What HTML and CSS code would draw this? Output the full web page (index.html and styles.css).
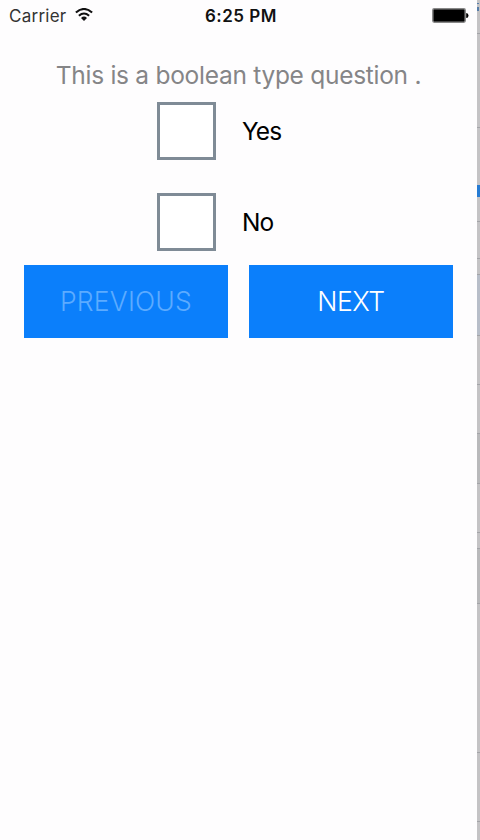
FILE: index.html
```html
<!DOCTYPE html>
<html lang="en">
<head>
<meta charset="utf-8">
<title>Survey</title>
<link rel="stylesheet" href="styles.css">
</head>
<body>
<div class="screen">
  <header class="status">
    <div class="carrier"><span>Carrier</span>
      <svg class="wifi" width="18" height="13" viewBox="0 0 18 13" fill="none" stroke="#111" stroke-width="2.1"><path d="M.9 4.5Q9-2.5 17.1 4.5M3.9 7.7Q9 3.3 14.1 7.7"/><path d="M6 9.9Q9 7.3 12 9.9L9 13Z" fill="#111" stroke="none"/></svg>
    </div>
    <span class="time">6:25 PM</span>
    <svg class="battery" width="37" height="15" viewBox="0 0 37 15"><rect x=".8" y=".8" width="32.4" height="13.4" rx="1.4" fill="#000" stroke="#888" stroke-width="1.5"/><path d="M34.2 5Q36.5 5 36.5 7.5T34.2 10Z" fill="#000"/></svg>
  </header>
  <main>
    <h1 class="question">This is a boolean type question .</h1>
    <div class="options">
      <div class="option"><span class="box"></span><span class="label yes">Yes</span></div>
      <div class="option"><span class="box"></span><span class="label no">No</span></div>
    </div>
    <div class="actions">
      <button class="button previous" disabled>PREVIOUS</button>
      <button class="button next">NEXT</button>
    </div>
  </main>
</div>
<svg class="edge" width="3" height="840" viewBox="0 0 3 840"><path fill="#c4c3c5" d="M0 0h3v840H0z"/><path fill="#b8bec9" d="M0 275h3v60H0z"/><path fill="#b9b9bb" d="M0 433h3v50H0zM0 548h3v55H0z"/><path fill="#a3a4a8" d="M0 33h3v1H0zM0 127h3v1H0zM0 221h3v1H0zM0 258h3v1H0zM0 274h3v1H0zM0 335h3v1H0zM0 384h3v1H0zM0 433h3v1H0zM0 483h3v1H0zM0 532h3v1H0zM0 548h3v1H0zM0 603h3v1H0zM0 752h3v1H0zM0 821h3v1H0z"/><path fill="#567da9" d="M0 3h2v1H0zM0 7h2v4H0z"/><path fill="#267bd3" d="M0 185h3v12H0z"/></svg>
</body>
</html>
```
FILE: styles.css
```css
* { box-sizing: border-box; }
body {
  margin: 0;
  width: 480px;
  height: 840px;
  display: flex;
  overflow: hidden;
  background: #fefdfe;
  font-family: Inter, "Liberation Sans", sans-serif;
}
.screen { width: 477px; }
.edge { display: block; flex: none; }
.status {
  height: 31px;
  padding: 0 8px 0 9px;
  display: grid;
  grid-template-columns: 1fr auto 1fr;
  align-items: center;
  color: #111;
}
.carrier {
  display: flex;
  align-items: center;
  gap: 9px;
  font-size: 17px;
  letter-spacing: .25px;
  color: #333;
}
.wifi { display: block; margin-top: -2px; }
.time { font-size: 17px; font-weight: 600; letter-spacing: .5px; margin-left: 4px; }
.battery { justify-self: end; }
.question {
  margin: 29px 0 0;
  height: 30px;
  line-height: 30px;
  text-align: center;
  font-size: 24.5px;
  font-weight: 400;
  letter-spacing: -.28px;
  color: #858587;
  white-space: nowrap;
}
.options { margin: 12px 0 0 157px; display: grid; gap: 33px; }
.option { display: flex; align-items: center; height: 58px; gap: 26px; }
.box { width: 59px; height: 58px; border: 3px solid #7f8b96; background: #fff; }
.label { font-size: 24.5px; line-height: 30px; letter-spacing: -.9px; color: #000; }
.actions { display: flex; gap: 21px; margin: 14px 0 0 24px; }
.button {
  width: 204px;
  height: 73px;
  padding: 0;
  border: 0;
  background: #0b7ffb;
  color: #fff;
  font: 300 26.5px/73px Inter, "Liberation Sans", sans-serif;
  letter-spacing: -.4px;
}
.previous { color: #5cabff; letter-spacing: .2px; }
```
